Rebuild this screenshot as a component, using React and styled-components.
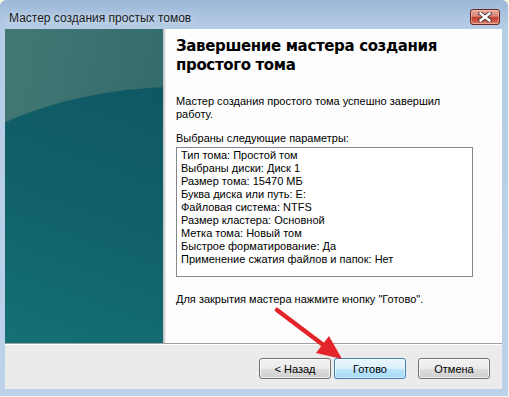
import React from "react"
import styled, { createGlobalStyle } from "styled-components"

const Global = createGlobalStyle`
  body {
    margin: 0;
    background: #fcf9df;
    font-family: "Liberation Sans", Arial, sans-serif;
  }
`

const Window = styled.div`
  position: relative;
  width: 508px;
  height: 396px;
  box-sizing: border-box;
  padding-bottom: 7px;
  border-radius: 6px 6px 0 0;
  background: linear-gradient(180deg, #9cb8d8 0px, #b6cde6 29px, #bcd2ea 100%);
  display: flex;
  flex-direction: column;
`

const TitleBar = styled.div`
  height: 29px;
  flex-shrink: 0;
  display: flex;
  align-items: flex-start;
  justify-content: space-between;
  padding: 0 8px 0 9px;
`

const Title = styled.div`
  margin-top: 10px;
  font-size: 12px;
  line-height: 16px;
  color: #1b1b1b;
  text-shadow: 0 0 6px rgba(255, 255, 255, 0.7);
`

const CloseButton = styled.div`
  margin-top: 9px;
  width: 30px;
  height: 16px;
  box-sizing: border-box;
  border: 1px solid #6a2620;
  border-radius: 3px;
  background: linear-gradient(180deg, #eaa89a 0%, #d98576 45%, #c43f31 52%, #cc5646 78%, #e08a77 100%);
  box-shadow: inset 0 0 0 1px rgba(255, 210, 200, 0.45);
  display: flex;
  align-items: center;
  justify-content: center;
`

const Client = styled.div`
  flex: 1;
  margin: 0 6px 0 5px;
  display: flex;
  flex-direction: column;
  background: #ebebeb;
`

const Main = styled.div`
  height: 314px;
  display: flex;
`

const Sidebar = styled.div`
  position: relative;
  overflow: hidden;
  width: 158px;
  background: linear-gradient(100deg, #437874 0%, #3a716f 50%, #2e6969 100%);

  &::after {
    content: "";
    position: absolute;
    left: -140px;
    top: 58px;
    width: 630px;
    height: 420px;
    border-radius: 50%;
    background: linear-gradient(200deg, #0c5360 0%, #0e5864 20%, #11626b 45%, #146c73 60%, #177479 75%);
    box-shadow: 0 -1px 2px rgba(60, 110, 108, 0.6);
  }
`

const Shade = styled.div`
  width: 3px;
  background: linear-gradient(90deg, #bdbdbd, #dcdcdc 60%, #f4f4f4);
`

const Content = styled.div`
  flex: 1;
  background: #fdfdfd;
  padding: 8px 10px 0 10px;
  color: #000;
  font-size: 11px;
  line-height: 13px;
`

const Heading = styled.h1`
  margin: 0 0 20px;
  font-family: "DejaVu Sans", Verdana, sans-serif;
  font-size: 15px;
  letter-spacing: -0.35px;
  line-height: 19px;
  font-weight: bold;
  color: #000;
`

const Text = styled.p`
  margin: 0 0 ${p => p.$gap || 0}px;
  width: ${p => p.$width || "auto"};
`

const ParamBox = styled.div`
  width: 297px;
  height: 130px;
  box-sizing: border-box;
  border: 1px solid #828790;
  padding: 1px 4px;
  background: #fff;
  margin-bottom: 16px;
`

const ParamLine = styled.div`
  white-space: nowrap;
`

const Divider = styled.div`
  height: 2px;
  box-sizing: border-box;
  border-top: 1px solid #a0a0a0;
  border-bottom: 1px solid #ffffff;
`

const Footer = styled.div`
  flex: 1;
  display: flex;
  justify-content: flex-end;
  align-items: flex-start;
  padding: 13px 12px 0 0;
`

const Button = styled.div`
  width: 72px;
  height: 21px;
  box-sizing: border-box;
  margin-left: ${p => p.$gap || 0}px;
  border: 1px solid ${p => (p.$default ? "#3c7fb1" : "#707070")};
  border-radius: 3px;
  background: ${p =>
    p.$default
      ? "linear-gradient(180deg, #eaf6fd 0%, #d9f0fc 50%, #bee6fd 51%, #a7d9f5 100%)"
      : "linear-gradient(180deg, #f2f2f2 0%, #ebebeb 50%, #dddddd 51%, #cfcfcf 100%)"};
  box-shadow: inset 0 0 0 1px ${p => (p.$default ? "rgba(255,255,255,0.55)" : "rgba(255,255,255,0.7)")};
  display: flex;
  align-items: center;
  justify-content: center;
  font-size: 11px;
  color: #000;
`

const ArrowLayer = styled.svg`
  position: absolute;
  left: 0;
  top: 0;
  pointer-events: none;
`

const params = [
  "Тип тома: Простой том",
  "Выбраны диски: Диск 1",
  "Размер тома: 15470 МБ",
  "Буква диска или путь: E:",
  "Файловая система: NTFS",
  "Размер кластера: Основной",
  "Метка тома: Новый том",
  "Быстрое форматирование: Да",
  "Применение сжатия файлов и папок: Нет",
]

export default function App() {
  return (
    <>
      <Global />
      <Window>
        <TitleBar>
          <Title>Мастер создания простых томов</Title>
          <CloseButton>
            <svg width="14" height="10" viewBox="0 0 14 10">
              <path d="M2.5 1.5 L11.5 8.5 M11.5 1.5 L2.5 8.5" stroke="#4b3532" strokeWidth="4.2" strokeLinecap="square" />
              <path d="M2.5 1.5 L11.5 8.5 M11.5 1.5 L2.5 8.5" stroke="#ffffff" strokeWidth="2.4" strokeLinecap="square" />
            </svg>
          </CloseButton>
        </TitleBar>
        <Client>
          <Main>
            <Sidebar />
            <Shade />
            <Content>
              <Heading>
                Завершение мастера создания
                <br />
                простого тома
              </Heading>
              <Text $gap={11} $width="290px">
                Мастер создания простого тома успешно завершил работу.
              </Text>
              <Text $gap={2}>Выбраны следующие параметры:</Text>
              <ParamBox>
                {params.map(line => (
                  <ParamLine key={line}>{line}</ParamLine>
                ))}
              </ParamBox>
              <Text>Для закрытия мастера нажмите кнопку "Готово".</Text>
            </Content>
          </Main>
          <Divider />
          <Footer>
            <Button>&lt; Назад</Button>
            <Button $default $gap={3}>Готово</Button>
            <Button $gap={12}>Отмена</Button>
          </Footer>
        </Client>
        <ArrowLayer width="508" height="396">
          <line x1="277" y1="310" x2="326" y2="347" stroke="#e3242b" strokeWidth="4.5" strokeLinecap="round" />
          <polygon points="342,359 316,353 329,336" fill="#e3242b" />
        </ArrowLayer>
      </Window>
    </>
  )
}
